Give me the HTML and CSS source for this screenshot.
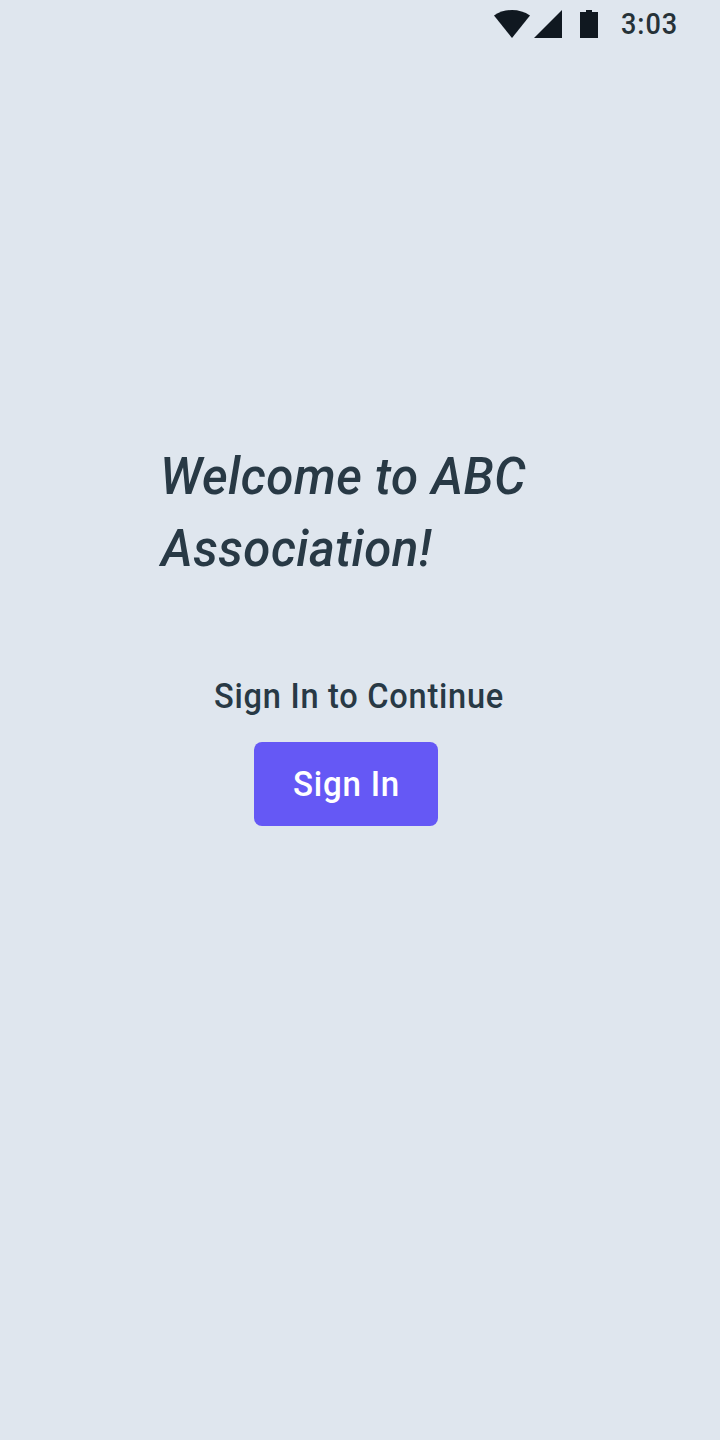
FILE: index.html
```html
<!DOCTYPE html>
<html lang="en">
<head>
<meta charset="utf-8">
<title>Welcome</title>
<link rel="stylesheet" href="styles.css">
</head>
<body>
<div class="screen">
  <header class="status">
    <svg class="wifi" width="36" height="28" viewBox="0 0 36 28"><path d="M0 5.5Q8 0 18 0T36 5.5L18 28Z"/></svg>
    <svg class="signal" width="28" height="28" viewBox="0 0 28 28"><path d="M28 0V28H0Z"/></svg>
    <svg class="battery" width="18" height="28" viewBox="0 0 18 28"><path d="M0 2H6V0H12V2H18V28H0Z"/></svg>
    <svg class="time" width="60" height="36"><text x="1" y="24" textLength="57" lengthAdjust="spacingAndGlyphs">3:03</text></svg>
  </header>
  <main class="content">
    <h1 class="title">
      <svg class="title-line" width="400" height="72"><text x="0" y="54" textLength="366" lengthAdjust="spacingAndGlyphs">Welcome to ABC</text></svg>
      <svg class="title-line" width="400" height="72"><text x="1" y="54" textLength="271" lengthAdjust="spacingAndGlyphs">Association!</text></svg>
    </h1>
    <p class="prompt"><svg width="300" height="48"><text x="0" y="36" textLength="290" lengthAdjust="spacingAndGlyphs">Sign In to Continue</text></svg></p>
    <button class="signin"><svg width="110" height="48"><text x="1" y="36" textLength="107" lengthAdjust="spacingAndGlyphs">Sign In</text></svg></button>
  </main>
</div>
</body>
</html>
```
FILE: styles.css
```css
body { margin: 0; background: #dfe6ee; font-family: Roboto, "Liberation Sans", sans-serif; }
svg { display: block; flex: none; overflow: visible; }
.screen { min-height: 1440px; box-sizing: border-box; }
.status { height: 48px; box-sizing: border-box; padding: 10px 0 0 494px; display: flex; fill: #101820; }
.signal { margin-left: 4px; }
.battery { margin-left: 18px; }
.time { margin-left: 22px; fill: #263238; font-size: 29px; font-weight: 500; letter-spacing: 1px; }
.content { padding-top: 392px; }
.title { margin: 0 0 0 160px; font-size: 52px; font-style: italic; font-weight: 500; letter-spacing: 0.5px; fill: #283945; }
.prompt { margin: 88px 0 0 214px; font-size: 35px; font-weight: 500; letter-spacing: 0.8px; fill: #283945; }
.signin { display: flex; align-items: center; width: 184px; height: 84px; margin: 22px 0 0 254px; padding: 0 0 0 38px; border: 0; border-radius: 8px; background: #6558f5; font: 500 35px Roboto, sans-serif; letter-spacing: 0.8px; fill: #fff; }
```
